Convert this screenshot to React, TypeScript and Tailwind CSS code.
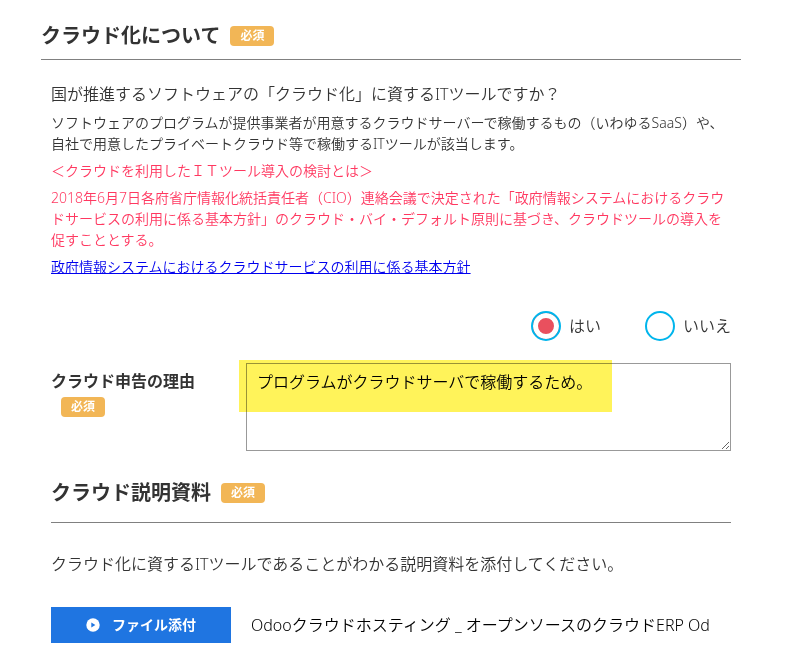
import { useState } from "react"

function RequiredBadge() {
  return (
    <span className="inline-block h-5 w-11 rounded bg-[#f2b656] text-center text-xs leading-5 font-bold text-white">
      必須
    </span>
  )
}

function PlayIcon() {
  return (
    <svg viewBox="0 0 14 14" className="h-[14px] w-[14px]" aria-hidden="true">
      <circle cx="7" cy="7" r="6.7" fill="#fff" />
      <path d="M5.3 4.6 L9.4 7 L5.3 9.4 Z" fill="#1f75e1" />
    </svg>
  )
}

const options = [
  { value: "yes", label: "はい" },
  { value: "no", label: "いいえ" },
]

export default function App() {
  const [cloud, setCloud] = useState("yes")
  const [reason, setReason] = useState("プログラムがクラウドサーバで稼働するため。")

  return (
    <main className="bg-white pt-5 pr-[49px] pb-6 pl-[41px] font-['Noto_Sans','Noto_Sans_CJK_JP',sans-serif] font-[350] text-[#333]">
      <section>
        <div className="flex items-center gap-2.5 border-b border-[#808080] pb-[7px]">
          <h1 className="text-xl leading-8 font-bold">クラウド化について</h1>
          <RequiredBadge />
        </div>

        <div className="px-2.5 pt-[22px]">
          <p className="text-base leading-6">
            国が推進するソフトウェアの「クラウド化」に資するITツールですか？
          </p>
          <div className="mt-1.5 flex flex-col gap-1.5 text-sm leading-[21px]">
            <p>
              ソフトウェアのプログラムが提供事業者が用意するクラウドサーバーで稼働するもの（いわゆるSaaS）や、自社で用意したプライベートクラウド等で稼働するITツールが該当します。
            </p>
            <p className="text-[#ff3860]">＜クラウドを利用したＩＴツール導入の検討とは＞</p>
            <p className="text-[#ff3860]">
              2018年6月7日各府省庁情報化統括責任者（CIO）連絡会議で決定された「政府情報システムにおけるクラウドサービスの利用に係る基本方針」のクラウド・バイ・デフォルト原則に基づき、クラウドツールの導入を促すこととする。
            </p>
            <p>
              <a href="#policy" className="text-[#0000ee] underline">
                政府情報システムにおけるクラウドサービスの利用に係る基本方針
              </a>
            </p>
          </div>

          <div className="mt-[34px] flex justify-end gap-11" role="radiogroup" aria-label="クラウド化">
            {options.map((option) => (
              <label key={option.value} className="flex items-center gap-2 text-base leading-6">
                <input
                  type="radio"
                  name="cloud"
                  value={option.value}
                  checked={cloud === option.value}
                  onChange={() => setCloud(option.value)}
                  className="h-[30px] w-[30px] appearance-none rounded-full border-2 border-[#00b5ec] bg-white shadow-[inset_0_0_0_5px_white] checked:bg-[#e9505e]"
                />
                {option.label}
              </label>
            ))}
          </div>

          <div className="mt-[22px] flex">
            <div className="w-[195px] shrink-0 pt-1.5">
              <label htmlFor="reason" className="block text-base leading-6 font-bold">
                クラウド申告の理由
              </label>
              <div className="flex pt-1 pl-2.5">
                <RequiredBadge />
              </div>
            </div>
            <div className="relative flex flex-1">
              <textarea
                id="reason"
                value={reason}
                onChange={(e) => setReason(e.target.value)}
                className="h-[88px] w-full border border-[#999] bg-white px-2.5 py-1.5 text-base leading-6 text-black"
              />
              <div className="pointer-events-none absolute -top-[3px] -left-[7px] h-[52px] w-[373px] bg-[#fff35a] mix-blend-multiply" />
            </div>
          </div>
        </div>
      </section>

      <section className="px-2.5 pt-[26px]">
        <div className="flex items-center gap-2.5 border-b border-[#808080] pb-[13px]">
          <h2 className="text-xl leading-8 font-bold">クラウド説明資料</h2>
          <RequiredBadge />
        </div>
        <p className="pt-[29px] text-base leading-6">
          クラウド化に資するITツールであることがわかる説明資料を添付してください。
        </p>
        <div className="mt-[31px] flex items-center gap-5">
          <button
            type="button"
            className="flex h-9 w-[180px] shrink-0 items-center justify-center gap-3 bg-[#1f75e1] text-sm font-bold text-white"
          >
            <PlayIcon />
            ファイル添付
          </button>
          <span className="text-base leading-6 whitespace-nowrap text-black">
            Odooクラウドホスティング _ オープンソースのクラウドERP Od
          </span>
        </div>
      </section>
    </main>
  )
}
